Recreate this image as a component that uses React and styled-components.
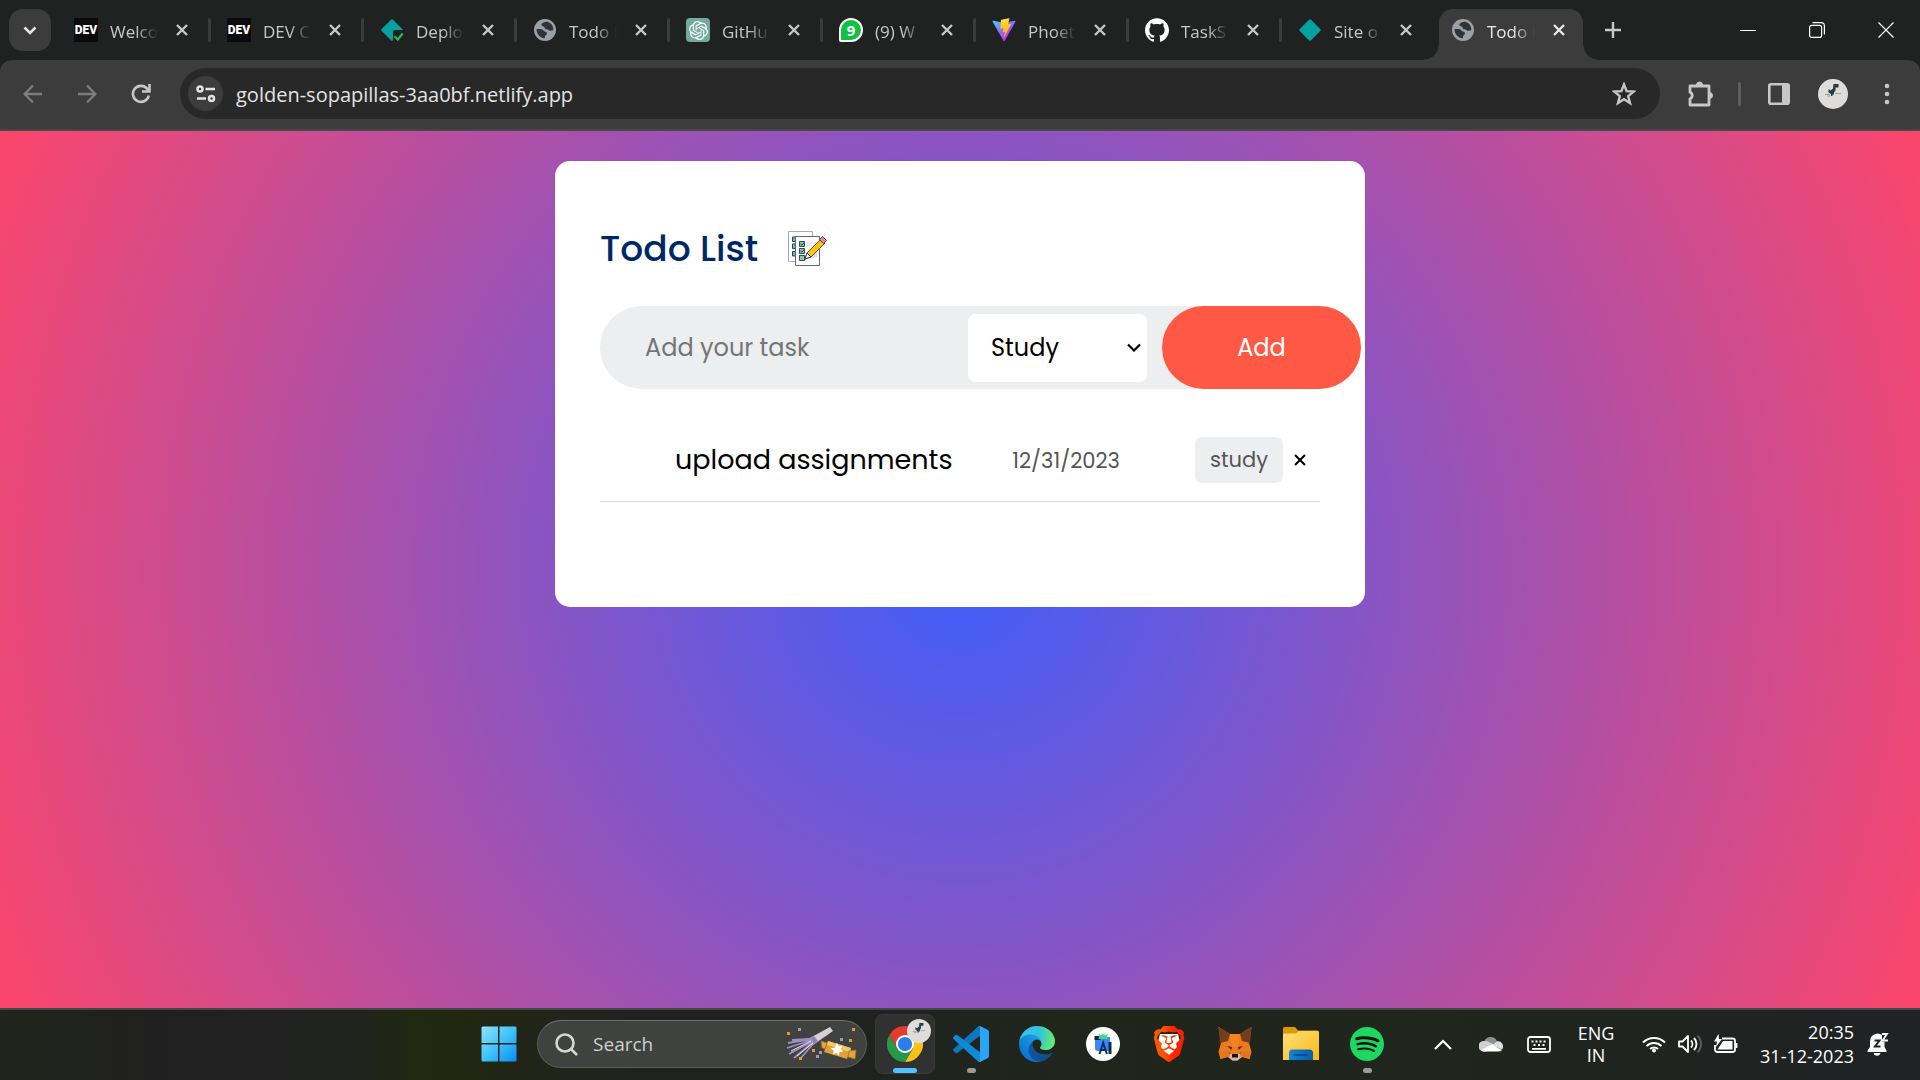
import React from "react";
import styled, { createGlobalStyle, css } from "styled-components";
import { SiBrave, SiSpotify, SiOpenai, SiGithub } from "react-icons/si";

const GlobalStyle = createGlobalStyle`
  *, *::before, *::after { box-sizing: border-box; }
  body { margin: 0; font-family: "Open Sans", "Noto Sans", sans-serif; }
  button, input, select { font: inherit; color: inherit; border: 0; margin: 0; padding: 0; background: none; outline: 0; }
  svg { display: block; flex: none; }
`;

const Desktop = styled.div`
  min-height: 100vh;
  display: flex;
  flex-direction: column;
  background: #202221;
`;

/* ---------- Browser chrome ---------- */

const TabStrip = styled.header`
  display: flex;
  height: 60px;
  padding: 9px 0 0 9px;
  color: #c7c7c7;
`;

const TabSearch = styled.button`
  width: 42px;
  height: 42px;
  margin-right: 7px;
  display: grid;
  place-items: center;
  border-radius: 14px;
  background: #3c3c3c;
  color: #e3e3e3;
`;

const Tab = styled.div`
  position: relative;
  display: flex;
  align-items: center;
  gap: 12px;
  width: 153px;
  height: 42px;
  padding-left: 16px;
  ${(p) =>
    p.$divided &&
    css`
      &::after {
        content: "";
        width: 3px;
        height: 24px;
        margin-left: 2px;
        border-radius: 2px;
        background: #3c3c3c;
      }
    `}
  ${(p) =>
    p.$active &&
    css`
      width: 144px;
      height: 51px;
      margin-left: 4px;
      padding: 0 0 9px 12px;
      border-radius: 14px 14px 0 0;
      background: #3c3c3c;
      color: #e8e8e8;
      &::before,
      &::after {
        content: "";
        position: absolute;
        bottom: 0;
        width: 15px;
        height: 15px;
      }
      &::before {
        right: 100%;
        background: radial-gradient(circle at 0 0, transparent 14px, #3c3c3c 15px);
      }
      &::after {
        left: 100%;
        background: radial-gradient(circle at 100% 0, transparent 14px, #3c3c3c 15px);
      }
    `}
`;

const Favicon = styled.span`
  flex: none;
  display: grid;
  place-items: center;
  width: 24px;
  height: 24px;
`;

const DevBadge = styled(Favicon)`
  background: #0b0b0d;
  color: #fff;
  font: 900 12px/24px Roboto, sans-serif;
`;

const ChatBadge = styled(Favicon)`
  border-radius: 4px;
  background: #74aa9c;
  color: #fff;
`;

const CountBadge = styled(Favicon)`
  border: 2px solid #fff;
  border-radius: 12px 12px 12px 2px;
  background: #12c143;
  color: #fff;
  font: 700 15px/20px "Open Sans", sans-serif;
`;

const TabTitle = styled.button`
  width: 48px;
  flex: none;
  padding-top: 3px;
  text-align: left;
  white-space: nowrap;
  font-size: 17px;
  line-height: 24px;
  mask-image: linear-gradient(to right, #000 55%, transparent);
`;

const IconButton = styled.button`
  flex: none;
  display: grid;
  place-items: center;
  width: ${(p) => p.$size || 24}px;
  height: ${(p) => p.$size || 24}px;
  color: ${(p) => p.$color || "inherit"};
`;

const NewTab = styled(IconButton)`
  margin: 9px 0 0 18px;
  height: 24px;
`;

const WindowControls = styled.div`
  display: flex;
  align-items: center;
  height: 42px;
  margin-left: auto;
  color: #fff;
`;

const WindowButton = styled.button`
  display: grid;
  place-items: center;
  width: 69px;
  height: 42px;
`;

const Toolbar = styled.nav`
  display: flex;
  align-items: center;
  height: 71px;
  padding: 0 15px 2px 15px;
  border-bottom: 2px solid #484848;
  border-radius: 12px 12px 0 0;
  background: #3c3c3c;
  color: #c7c7c7;
`;

const NavButtons = styled.div`
  display: flex;
  gap: 18px;
  margin-right: 21px;
`;

const AddressBar = styled.div`
  flex: 1;
  display: flex;
  align-items: center;
  gap: 13px;
  height: 51px;
  padding: 0 18px 0 8px;
  border-radius: 26px;
  background: #282828;
`;

const SiteInfo = styled(IconButton)`
  border-radius: 50%;
  background: #3c3c3c;
`;

const Url = styled.input`
  flex: 1;
  min-width: 0;
  padding-top: 2px;
  color: #e3e3e3;
  font-size: 20px;
  line-height: 28px;
`;

const ToolbarActions = styled.div`
  display: flex;
  align-items: center;
  gap: 18px;
  margin-left: 22px;
`;

const ToolbarDivider = styled.span`
  width: 3px;
  height: 24px;
  margin: 0 2px;
  border-radius: 2px;
  background: #5e5e5e;
`;

/* ---------- Todo app ---------- */

const Page = styled.main`
  flex: 1;
  padding: 30px;
  background: radial-gradient(circle, #3f5efb 0%, #fc466b 100%);
  font-family: Poppins, Inter, "Open Sans", sans-serif;
`;

const Card = styled.section`
  max-width: 810px;
  margin: 0 auto;
  padding: 60px 45px 105px;
  border-radius: 15px;
  background: #fff;
`;

const Heading = styled.h1`
  display: flex;
  align-items: center;
  gap: 30px;
  margin: 0 0 30px;
  color: #002765;
  font-size: 36px;
  font-weight: 500;
  line-height: 55px;
`;

const TaskForm = styled.form`
  display: flex;
  align-items: center;
  height: 83px;
  border-radius: 42px;
  background: #edeef0;
  font-size: 24px;
`;

const TaskInput = styled.input`
  flex: 0 0 368px;
  width: 368px;
  min-width: 0;
  height: 100%;
  padding-left: 45px;
  &::placeholder { color: #757575; opacity: 1; }
`;

const SelectBox = styled.div`
  flex: 0 0 179px;
  display: grid;
  align-items: center;
  height: 68px;
  margin-right: 15px;
  border-radius: 7px;
  background: #fff;
  color: #000;
  & > * { grid-area: 1 / 1; }
  & > svg { justify-self: end; margin-right: 6px; pointer-events: none; }
`;

const Category = styled.select`
  appearance: none;
  width: 100%;
  height: 100%;
  padding-left: 23px;
`;

const AddButton = styled.button`
  flex: 0 0 199px;
  height: 100%;
  border-radius: 42px;
  background: #ff5945;
  color: #fff;
`;

const TaskList = styled.ul`
  margin: 30px 0 0;
  padding: 0;
  list-style: none;
`;

const TaskItem = styled.li`
  display: flex;
  align-items: center;
  height: 83px;
  padding: 0 12px 0 75px;
  border-bottom: 1px solid #d9dadb;
`;

const TaskName = styled.span`
  color: #000;
  font-size: 27px;
  font-weight: 400;
`;

const TaskDate = styled.time`
  margin: 0 75px 0 auto;
  color: #555;
  font-size: 21px;
`;

const TaskTag = styled.span`
  padding: 9px 15px;
  margin-right: 8px;
  border-radius: 7px;
  background: #edeef0;
  color: #555;
  font-size: 21px;
  line-height: 28px;
`;

/* ---------- Taskbar ---------- */

const Taskbar = styled.footer`
  display: flex;
  align-items: center;
  justify-content: flex-end;
  height: 72px;
  padding: 0 30px 2px 0;
  border-top: 2px solid #444645;
  background: linear-gradient(90deg, #20241b 0%, #202020 8%, #202220 18%, #212911 22%, #222613 25%, #202220 33%, #20221f 45%, #20261c 55%, #20251d 75%, #202322 92%, #202224 100%);
  color: #fff;
`;

const AppIcons = styled.div`
  display: flex;
  align-items: center;
  gap: 6px;
  margin-right: 34px;
`;

const AppButton = styled.button`
  position: relative;
  display: grid;
  place-items: center;
  width: 60px;
  height: 60px;
  border: 1px solid ${(p) => (p.$open ? "#393a39" : "transparent")};
  border-radius: 8px;
  background: ${(p) => (p.$open ? "#303130" : "transparent")};
  ${(p) =>
    p.$running &&
    css`
      &::after {
        content: "";
        position: absolute;
        bottom: 0;
        width: ${p.$open ? 24 : 9}px;
        height: 5px;
        border-radius: 3px;
        background: ${p.$open ? "#4cc2ff" : "#9a9a9a"};
      }
    `}
`;

const ProfileBadge = styled.span`
  position: absolute;
  top: 4px;
  right: 3px;
`;

const SearchBox = styled.label`
  display: flex;
  align-items: center;
  gap: 15px;
  width: 330px;
  height: 48px;
  margin: 0 2px;
  padding: 0 8px 0 16px;
  border: 1px solid #5a5b5a;
  border-top-color: #6d6e6d;
  border-radius: 24px;
  background: #40423f;
  color: #d6d6d6;
`;

const SearchInput = styled.input`
  flex: 1;
  min-width: 0;
  font-size: 19px;
  line-height: 28px;
  &::placeholder { color: #d0d0d0; opacity: 1; }
`;

const Tray = styled.div`
  display: flex;
  align-items: center;
  font-size: 18px;
  line-height: 24px;
`;

const TrayGroup = styled.div`
  display: flex;
  align-items: center;
  gap: ${(p) => p.$gap}px;
`;

const Language = styled.button`
  width: 48px;
  margin: 0 22px 0 21px;
  text-align: center;
  line-height: 22px;
`;

const Clock = styled.button`
  margin: 0 12px 0 22px;
  text-align: right;
`;

/* ---------- Icons ---------- */

const Stroke = ({ w = 24, h = w, box = `0 0 ${w} ${h}`, sw = 2, children, ...rest }) => (
  <svg width={w} height={h} viewBox={box} fill="none" stroke="currentColor" strokeWidth={sw} aria-hidden="true" {...rest}>
    {children}
  </svg>
);

const CloseIcon = ({ sw = 2.4 }) => (
  <Stroke w={12} sw={sw}><path d="M1 1l10 10M11 1L1 11" /></Stroke>
);

const Globe = () => (
  <svg width="24" height="24" viewBox="0 0 24 24" aria-hidden="true">
    <circle cx="12" cy="12" r="11" fill="#9aa0a6" />
    <path d="M13.500 3.500c-1.400.5-3.600 1-4.800 2.300-1 1.200.3 2.500 1.600 2.600 1.500.2 1 1.600 2 2.600.9.9 2.400.3 3.400 1.200 1 .9 2.600.6 4.600.1.4-4.300-2.400-7.900-6.800-8.800z" fill="#303434" />
    <path d="M3.500 11.200c0 4.800 3.600 8.600 8.100 9.100.8-.9-.2-2 .9-2.900 1.100-.8 2-1.500 1.300-2.800-.8-1.300-2.400-.8-3.200-1.900-1.200-1.500-4.200-1.800-7.100-1.500z" fill="#303434" />
  </svg>
);

const Diamond = ({ check }) => (
  <svg width="24" height="24" viewBox="0 0 24 24" aria-hidden="true">
    <rect x="4" y="4" width="16" height="16" rx="1.5" fill="#05a19c" transform="rotate(45 12 12)" />
    {check && <path d="M13 24V14q0-2 2-2h9v12z" fill="#202221" />}
    {check && <path d="M14.500 18.300l3.200 3.200 5-6" fill="none" stroke="#2fb554" strokeWidth="2.2" />}
  </svg>
);

const ViteIcon = () => (
  <svg width="24" height="24" viewBox="0 0 410 404" aria-hidden="true">
    <defs>
      <linearGradient id="viteA" x1="6" y1="33" x2="235" y2="344" gradientUnits="userSpaceOnUse"><stop stopColor="#41d1ff" /><stop offset="1" stopColor="#bd34fe" /></linearGradient>
      <linearGradient id="viteB" x1="194" y1="9" x2="236" y2="293" gradientUnits="userSpaceOnUse"><stop stopColor="#ffea83" /><stop offset=".08" stopColor="#ffdd35" /><stop offset="1" stopColor="#ffa800" /></linearGradient>
    </defs>
    <path fill="url(#viteA)" d="M399.641 59.525L215.643 388.545c-3.800 6.793-13.560 6.833-17.415.073L10.582 59.556c-4.200-7.366 2.100-16.290 10.446-14.797l184.195 32.923c1.175.21 2.378.208 3.553-.006l180.343-32.870c8.320-1.517 14.649 7.337 10.522 14.719z" />
    <path fill="url(#viteB)" d="M292.965 1.574L156.801 28.255a5 5 0 0 0-4.030 4.611l-8.376 141.464a5 5 0 0 0 6.115 5.168l37.910-8.749a5 5 0 0 1 6.023 5.873l-11.263 55.153a5 5 0 0 0 6.352 5.785l23.415-7.114a5 5 0 0 1 6.350 5.796l-17.899 86.633c-1.120 5.419 6.088 8.374 9.094 3.728l2.008-3.103 110.954-221.428a5 5 0 0 0-5.418-7.149l-39.022 7.531a5 5 0 0 1-5.752-6.296l25.469-88.291a5 5 0 0 0-5.766-6.293z" />
  </svg>
);

const Dino = ({ size }) => (
  <svg width={size} height={size} viewBox="0 0 30 30" aria-hidden="true">
    <circle cx="15" cy="15" r="15" fill="#dedddb" />
    <path d="M15.500 5h5v3.500h-3v3l-1.500 2v2h-1.500v1.500H13V15l-2.500-1.500V10l2 1.500 2.500-2z" fill="#2f3a40" />
    <path d="M7 15.500h5M17 14.500h6M9 17h3" stroke="#8f9090" strokeWidth=".8" />
  </svg>
);

const TodoIcon = () => (
  <svg width="39" height="36" viewBox="0 0 39 36" aria-hidden="true">
    <path d="M.5.500h24v30H.500z" fill="#fff" stroke="#a3a7cf" />
    <path d="M4.500 6h3v4.500h-3zM4.500 13h3v4.500h-3zM4.500 20.500h3V25h-3z" fill="#6fc07a" stroke="#2c3f72" />
    <path d="M7.500 5.500h24v29h-24z" fill="#fff" stroke="#5a62a8" />
    <path d="M19 12h9M19 15h7" stroke="#d9dcef" />
    <path d="M24 23l5-5v8l-7 1z" fill="#d9dcef" />
    <path d="M11.500 10.500h5v5h-5zM11.500 17.500h5v5h-5zM11.500 24.500h5v5h-5z" fill="#84cf8c" stroke="#2c4a62" />
    <path d="M12.500 13l1.500 1.200 2-2.700M12.500 20l1.500 1.200 2-2.700" fill="none" stroke="#2c3f72" />
    <path d="M17 28l2-6L33 8l4 4-14 14z" fill="#fbc412" stroke="#6b5226" />
    <path d="M17 28l2-6 4 4z" fill="#fff" stroke="#34407a" />
    <path d="M31.500 8.500l3-3 4 4-3 3z" fill="#f2818b" stroke="#4b4b86" />
  </svg>
);

const WindowsIcon = () => (
  <svg width="36" height="36" viewBox="0 0 36 36" aria-hidden="true">
    <defs><linearGradient id="win" x2="1" y2="1"><stop stopColor="#8fe3ff" /><stop offset=".5" stopColor="#3fc3fb" /><stop offset="1" stopColor="#0a8cf5" /></linearGradient></defs>
    <path fill="url(#win)" d="M1.500.500H17V17H.500V1.500zM18.500.500h16l1 1V17h-17zM.500 18.500H17v17H1.500l-1-1zM18.500 18.500h17v16l-1 1h-16z" />
  </svg>
);

const PartyArt = () => (
  <svg width="72" height="36" viewBox="0 0 72 36" aria-hidden="true">
    <path d="M22 13L44 1l3 4-20 14z" fill="#d9cdd6" />
    <path d="M22 13l6-3 4 5-5 4z" fill="#8e82b5" />
    <path d="M26 13L2 17M26 14L1 22M27 15L3 28M27 16L8 32M28 17L14 33M24 13L6 14" stroke="#9d8fc4" strokeWidth="1.8" />
    <path d="M25 15L5 25M27 17L11 30" stroke="#ece6f5" strokeWidth="1" />
    <path d="M42 15l23 7-4 11-23-7z" fill="#dda137" />
    <path d="M42 15l23 7-1 4-23-7z" fill="#f1c76b" />
    <path d="M41 17l-6-2 1 7 3 1zM63 25l7-1-1 9-7-2z" fill="#e0a63f" stroke="#a8711c" strokeWidth=".8" />
    <path d="M51 16.500l1.500 4 4-1-2 3.500 3 2.500-4 .5-.5 4-2.500-3-4 1.500 1.500-3.500-3.500-2.500 4.500-1z" fill="#fff" />
    <path d="M1 6h3v3H1zM66 2h3v3h-3zM63 13h3v3h-3zM26 23h3v3h-3zM13 31h3v3h-3z" fill="#d99f33" />
    <path d="M12 2h3v3h-3zM54 12h3v3h-3zM33 25h3v3h-3zM30 29h3v3h-3z" fill="#a493bd" />
  </svg>
);

const ChromeIcon = () => (
  <svg width="36" height="36" viewBox="0 0 48 48" aria-hidden="true">
    <path d="M3.215 12a24 24 0 0 1 41.570 0H24L13.608 30z" fill="#e33b2e" />
    <path d="M44.785 12A24 24 0 0 1 24 48l10.392-18L24 12z" fill="#fbc116" />
    <path d="M24 48A24 24 0 0 1 3.215 12l10.393 18h20.784z" fill="#279847" />
    <circle cx="24" cy="24" r="12" fill="#fff" />
    <circle cx="24" cy="24" r="9.5" fill="#2f7bea" />
  </svg>
);

const CodeIcon = () => (
  <svg width="36" height="36" viewBox="0 0 100 100" aria-hidden="true">
    <path fill="#0f76bd" d="M96.460 10.800L75.860.880a6.230 6.230 0 0 0-7.100 1.200L1.300 63.580a4.170 4.170 0 0 0 .010 6.160l5.500 5a4.170 4.170 0 0 0 5.330.24l81.230-61.620c2.730-2.070 6.640-.13 6.640 3.290v-.24a6.250 6.250 0 0 0-3.550-5.610z" />
    <path fill="#0d8ad8" d="M96.460 89.200l-20.600 9.920a6.230 6.230 0 0 1-7.100-1.200L1.300 36.420a4.170 4.170 0 0 1 .010-6.160l5.500-5a4.170 4.170 0 0 1 5.330-.24l81.230 61.620c2.730 2.070 6.640.13 6.640-3.290v.24a6.250 6.250 0 0 1-3.550 5.610z" />
    <path fill="#2aa5f5" d="M75.860 99.130a6.230 6.230 0 0 1-7.100-1.200c2.300 2.300 6.240.67 6.240-2.590V4.660c0-3.260-3.940-4.900-6.240-2.590a6.230 6.230 0 0 1 7.100-1.200l20.600 9.900A6.250 6.250 0 0 1 100 16.400v67.200a6.250 6.250 0 0 1-3.540 5.630z" />
  </svg>
);

const EdgeIcon = () => (
  <svg width="36" height="36" viewBox="0 0 256 256" aria-hidden="true">
    <defs>
      <linearGradient id="edA" x1="60" y1="177" x2="240" y2="177" gradientUnits="userSpaceOnUse"><stop stopColor="#0c59a4" /><stop offset="1" stopColor="#114a8b" /></linearGradient>
      <linearGradient id="edB" x1="157" y1="100" x2="46" y2="221" gradientUnits="userSpaceOnUse"><stop stopColor="#1b9de2" /><stop offset="1" stopColor="#0d74cf" /></linearGradient>
      <radialGradient id="edC" cx="26" cy="60" r="230" gradientUnits="userSpaceOnUse"><stop stopColor="#35c1f1" /><stop offset=".5" stopColor="#2fc2df" /><stop offset="1" stopColor="#66eb6e" /></radialGradient>
    </defs>
    <path fill="url(#edA)" d="M231.070 190.540c-3.380 1.760-6.900 3.300-10.500 4.600a101.900 101.900 0 0 1-35.900 6.460c-47.320 0-88.540-32.550-88.540-74.320A31.480 31.480 0 0 1 112.600 100c-42.800 1.800-53.800 46.400-53.800 72.530 0 73.880 68.090 81.370 82.760 81.370 7.910 0 19.840-2.300 27-4.560l1.310-.44a128.340 128.340 0 0 0 66.600-52.800 4 4 0 0 0-5.400-5.560z" />
    <path fill="url(#edB)" d="M105.730 241.420A79.200 79.200 0 0 1 83 220.100a80.720 80.720 0 0 1 29.500-120.100c3.120-1.470 8.450-4.130 15.540-4a32.350 32.350 0 0 1 25.690 13 31.880 31.880 0 0 1 6.360 18.660c0-.21 24.460-79.600-80-79.600-43.900 0-80 41.660-80 78.210a130.150 130.150 0 0 0 12.110 56 128 128 0 0 0 156.380 67.110 75.550 75.550 0 0 1-62.780-8z" />
    <path fill="url(#edC)" d="M152.330 148.860c-.81 1.050-3.300 2.500-3.300 5.660 0 2.610 1.700 5.120 4.720 7.230 14.380 10 41.490 8.680 41.560 8.680a59.560 59.560 0 0 0 30.270-8.350A61.380 61.380 0 0 0 256 109.200c.26-22.410-8-37.310-11.340-43.910C223.460 23.840 177.720 0 128 0A128 128 0 0 0 0 126.200c.48-36.540 36.800-66.050 80-66.050 3.500 0 23.460.34 42 10.070 16.340 8.580 24.900 18.940 30.850 29.210 6.180 10.670 7.280 24.150 7.280 29.520s-2.740 13.330-7.800 19.910z" />
  </svg>
);

const StudioIcon = () => (
  <svg width="34" height="34" viewBox="0 0 34 34" aria-hidden="true">
    <circle cx="17" cy="17" r="17" fill="#fff" />
    <path d="M9 10h15v14H12q-3 0-3-3z" fill="#4285f4" />
    <path d="M8.500 9h6v4h-6z" fill="#12233b" />
    <path d="M12.500 12a4.700 4.700 0 0 1 9.400 0z" fill="#3ddc84" />
    <path d="M13 7l2 3M21.500 7l-2 3" stroke="#3ddc84" strokeWidth="1.2" />
    <path d="M13.500 27l3.700-11 3.700 11M14.500 23h5.500" fill="none" stroke="#0b3264" strokeWidth="2" />
    <path d="M22.500 15h3v12h-3z" fill="#073042" />
  </svg>
);

const BraveIcon = () => (
  <svg width="36" height="36" viewBox="0 0 36 36" aria-hidden="true">
    <defs><linearGradient id="brv"><stop offset=".3" stopColor="#ff5500" /><stop offset=".7" stopColor="#ff2000" /></linearGradient></defs>
    <path d="M9 8h18l2 8-4 12-7 4-7-4-4-12z" fill="#fff" />
    <SiBrave size={36} style={{ fill: "url(#brv)" }} />
  </svg>
);

const FoxIcon = () => (
  <svg width="34" height="34" viewBox="0 0 34 34" aria-hidden="true">
    <path d="M3 16L1 4 .500 0 12 7h10L33.500 0 33 4l-2 12 2.500 9-2 7-7-2-5 3.500h-5L9.500 30l-7 2-2-7z" fill="#ee7a1f" />
    <path d="M.500 0L12 7l-2 7-8 2zM33.500 0L22 7l2 7 8 2z" fill="#743d1b" />
    <path d="M12 7h10l-2 13h-6z" fill="#f5841f" />
    <path d="M1 24h9l-.500 6-7 2zM33 24h-9l.500 6 7 2z" fill="#e4761b" />
    <path d="M9 19l5 1-.500 3zM25 19l-5 1 .500 3z" fill="#463128" />
    <path d="M10 24l3 2-1 5zM24 24l-3 2 1 5z" fill="#c9601a" />
    <path d="M12 27h10l1 3-3.500 3.500h-5L11 30z" fill="#c8bcb3" />
    <path d="M14 27h6v3.500h-6z" fill="#161616" />
  </svg>
);

const FolderIcon = () => (
  <svg width="36" height="34" viewBox="0 0 36 34" aria-hidden="true">
    <defs>
      <linearGradient id="fld" x2="1" y2="1"><stop stopColor="#ffe07a" /><stop offset="1" stopColor="#f9b916" /></linearGradient>
      <linearGradient id="fldB" x2="1"><stop stopColor="#1583d8" /><stop offset="1" stopColor="#0b5cab" /></linearGradient>
    </defs>
    <path d="M0 1.500Q0 0 1.500 0H12l3 3.500h19q2 0 2 2V10H0z" fill="#dc9a05" />
    <path d="M0 8q0-1.500 1.500-1.500h11L16 4h18.500Q36 4 36 5.500V33H0z" fill="url(#fld)" />
    <path d="M6 33v-7q0-3.500 3.500-3.500h17Q30 22.500 30 26v7z" fill="url(#fldB)" />
    <path d="M10.500 28h14.500" stroke="#0a4685" strokeWidth="1.5" />
  </svg>
);

const SpotifyIcon = () => (
  <svg width="34" height="34" viewBox="0 0 34 34" aria-hidden="true">
    <circle cx="17" cy="17" r="15" fill="#111" />
    <SiSpotify size={34} style={{ fill: "#1ed760" }} />
  </svg>
);

const CloudIcon = () => (
  <svg width="24" height="16" viewBox="0 0 24 16" aria-hidden="true">
    <path d="M5 6a7 7 0 0 1 13-1l1 1-9 4z" fill="#8f918f" />
    <path d="M4.500 15.500A5 5 0 0 1 5 5q3-.5 5 1l8 4-11 5.500z" fill="#cfd0cf" />
    <path d="M13 9l5-3.500a5 5 0 0 1 5 8z" fill="#dcdddc" />
    <path d="M2 14L13 8.500l10 5.500q-1.500 1.500-4 1.500H5q-2 0-3-1.500z" fill="#fff" />
  </svg>
);

const KeyboardIcon = () => (
  <Stroke w={24} h={17} sw={1.8}>
    <rect x="1" y="1" width="22" height="15" rx="2.5" />
    <path d="M4.500 5.500h2M8.500 5.500h2M12.500 5.500h2M16.500 5.500h2M6.500 9h2M11 9h2M15.500 9h2M5 12.800h14" />
  </Stroke>
);

const WifiIcon = () => (
  <Stroke w={24} h={18} sw={2}>
    <path d="M1 7.500a15.500 15.500 0 0 1 22 0M4.500 11a10.600 10.600 0 0 1 15 0M8 14a5.800 5.800 0 0 1 8 0" />
    <circle cx="12" cy="15.5" r="1" />
  </Stroke>
);

const SpeakerIcon = () => (
  <Stroke w={24} h={20} sw={1.8}>
    <path d="M1 7.500h3.500L10 2v16l-5.500-5.500H1z" strokeLinejoin="round" />
    <path d="M13 6.500a5 5 0 0 1 0 7M16 4a8.500 8.500 0 0 1 0 12" />
    <path d="M19.500 1.500a12 12 0 0 1 0 17" stroke="#5d605d" />
  </Stroke>
);

const BatteryIcon = () => (
  <Stroke w={24} h={20} sw={1.8}>
    <path d="M8 4.500h10.500q2.500 0 2.500 2.500v8.500q0 2.500-2.500 2.500H3.500Q1 18 1 15.500V11" />
    <path d="M9 7h9.500v8.500H3.500z" fill="currentColor" stroke="none" />
    <path d="M22.500 9v5" />
    <path d="M4.500 0L0 7.500h3L2 13l6-8H5z" fill="currentColor" stroke="none" />
  </Stroke>
);

const BellIcon = () => (
  <svg width="22" height="24" viewBox="0 0 22 24" fill="#fff" aria-hidden="true">
    <path d="M10.500 1.500Q3 2.500 3 9.500V15l-2.500 3.500V20h19v-1.500L17.500 15V9.500H15V3q-2-1.500-4.500-1.500zM6.500 21h7a3.600 3.600 0 0 1-7 0z" />
    <path d="M7.500 8.500h5L8 14.500h5.500" fill="none" stroke="#202322" strokeWidth="2" />
    <path d="M15 2h5l-4.500 6.500H21" fill="none" stroke="#fff" strokeWidth="1.8" />
  </svg>
);

/* ---------- Data ---------- */

const tabs = [
  { title: "Welco", icon: <DevBadge>DEV</DevBadge> },
  { title: "DEV C", icon: <DevBadge>DEV</DevBadge> },
  { title: "Deplo", icon: <Favicon><Diamond check /></Favicon> },
  { title: "Todo L", icon: <Favicon><Globe /></Favicon> },
  { title: "GitHu", icon: <ChatBadge><SiOpenai size={19} /></ChatBadge> },
  { title: "(9) W", icon: <CountBadge>9</CountBadge> },
  { title: "Phoet", icon: <Favicon><ViteIcon /></Favicon> },
  { title: "TaskS", icon: <Favicon><SiGithub size={24} color="#fff" /></Favicon> },
  { title: "Site o", icon: <Favicon><Diamond /></Favicon> },
  { title: "Todo L", icon: <Favicon><Globe /></Favicon>, active: true },
];

const tasks = [{ name: "upload assignments", date: "12/31/2023", tag: "study" }];

const apps = [
  { name: "Visual Studio Code", icon: <CodeIcon />, running: true },
  { name: "Edge", icon: <EdgeIcon /> },
  { name: "Android Studio", icon: <StudioIcon /> },
  { name: "Brave", icon: <BraveIcon /> },
  { name: "MetaMask", icon: <FoxIcon /> },
  { name: "File Explorer", icon: <FolderIcon /> },
  { name: "Spotify", icon: <SpotifyIcon />, running: true },
];

/* ---------- Sections ---------- */

const BrowserTabs = () => (
  <TabStrip>
    <TabSearch aria-label="Search tabs">
      <Stroke w={14} h={9} sw={2.6}><path d="M1.500 1.500L7 7l5.500-5.500" /></Stroke>
    </TabSearch>
    {tabs.map((tab, i) => (
      <Tab key={i} $active={tab.active} $divided={i < tabs.length - 2}>
        {tab.icon}
        <TabTitle>{tab.title}</TabTitle>
        <IconButton aria-label="Close tab"><CloseIcon /></IconButton>
      </Tab>
    ))}
    <NewTab aria-label="New tab"><Stroke w={16} sw={2.4}><path d="M8 0v16M0 8h16" /></Stroke></NewTab>
    <WindowControls>
      <WindowButton aria-label="Minimize"><Stroke w={16} sw={1}><path d="M0 8.500h16" /></Stroke></WindowButton>
      <WindowButton aria-label="Restore">
        <Stroke w={16} sw={1.2}>
          <rect x=".6" y="3.4" width="12" height="12" rx="2" />
          <path d="M3.500.600H12q3.400 0 3.400 3.400v8.500" />
        </Stroke>
      </WindowButton>
      <WindowButton aria-label="Close"><Stroke w={16} sw={1.2}><path d="M.500.500l15 15M15.500.500l-15 15" /></Stroke></WindowButton>
    </WindowControls>
  </TabStrip>
);

const BrowserToolbar = () => (
  <Toolbar>
    <NavButtons>
      <IconButton $size={36} $color="#7d7d7d" aria-label="Back"><Stroke w={20} sw={2.3}><path d="M19 10H2M10 1.500L1.700 10l8.300 8.500" /></Stroke></IconButton>
      <IconButton $size={36} $color="#7d7d7d" aria-label="Forward"><Stroke w={20} sw={2.3}><path d="M1 10h17M10 1.500l8.300 8.500-8.300 8.500" /></Stroke></IconButton>
      <IconButton $size={36} aria-label="Reload">
        <Stroke w={20} sw={2.6}><path d="M17.800 11.500A8 8 0 1 1 16 4.600l1.500 1.900" /><path d="M18.500 0v7.500H11" /></Stroke>
      </IconButton>
    </NavButtons>
    <AddressBar>
      <SiteInfo $size={35} $color="#e3e3e3" aria-label="Site information">
        <Stroke w={20} h={18} sw={2.5}>
          <circle cx="4" cy="4" r="2.5" /><path d="M9.500 4H19M1 13.500h9" /><circle cx="15.5" cy="13.5" r="2.5" />
        </Stroke>
      </SiteInfo>
      <Url aria-label="Address" defaultValue="golden-sopapillas-3aa0bf.netlify.app" />
      <IconButton $size={36} aria-label="Bookmark">
        <Stroke w={24} sw={2.4}><path d="M12 2.500l2.600 6.600 7 .500-5.400 4.500 1.800 6.900-6-3.800-6 3.800 1.800-6.900-5.400-4.500 7-.500z" /></Stroke>
      </IconButton>
    </AddressBar>
    <ToolbarActions>
      <IconButton $size={36} aria-label="Extensions">
        <Stroke w={26} sw={2.8} strokeLinejoin="round">
          <path d="M3 5h19v19H3v-6.300a3.500 3.500 0 0 0 0-6.500z" />
          <path d="M9.500 4a3 3 0 0 1 6 0zM22.500 11.500a3 3 0 0 1 0 6z" fill="currentColor" strokeWidth="1" />
        </Stroke>
      </IconButton>
      <ToolbarDivider />
      <IconButton $size={36} aria-label="Side panel">
        <Stroke w={22} sw={2.6}><rect x="1.3" y="1.3" width="19.4" height="19.4" rx="1.5" /><path d="M14 2h6.500v18H14z" fill="currentColor" stroke="none" /></Stroke>
      </IconButton>
      <IconButton $size={36} aria-label="Profile"><Dino size={30} /></IconButton>
      <IconButton $size={36} aria-label="Menu">
        <svg width="6" height="22" viewBox="0 0 6 22" fill="currentColor" aria-hidden="true"><circle cx="3" cy="3" r="2.3" /><circle cx="3" cy="11" r="2.3" /><circle cx="3" cy="19" r="2.3" /></svg>
      </IconButton>
    </ToolbarActions>
  </Toolbar>
);

const TodoApp = () => (
  <Page>
    <Card>
      <Heading>Todo List <TodoIcon /></Heading>
      <TaskForm onSubmit={(e) => e.preventDefault()}>
        <TaskInput aria-label="Task" placeholder="Add your task" />
        <SelectBox>
          <Category aria-label="Category" defaultValue="study">
            <option value="study">Study</option>
            <option value="work">Work</option>
          </Category>
          <Stroke w={14} h={9} sw={2.2}><path d="M1 1.500l6 6 6-6" /></Stroke>
        </SelectBox>
        <AddButton>Add</AddButton>
      </TaskForm>
      <TaskList>
        {tasks.map((task) => (
          <TaskItem key={task.name}>
            <TaskName>{task.name}</TaskName>
            <TaskDate>{task.date}</TaskDate>
            <TaskTag>{task.tag}</TaskTag>
            <IconButton aria-label="Delete task" $size={17} $color="#000"><CloseIcon sw={2} /></IconButton>
          </TaskItem>
        ))}
      </TaskList>
    </Card>
  </Page>
);

const SystemTaskbar = () => (
  <Taskbar>
    <AppIcons>
      <AppButton aria-label="Start"><WindowsIcon /></AppButton>
      <SearchBox>
        <Stroke w={24} sw={2.6}><circle cx="11" cy="11" r="8.5" /><path d="M17 17l6 6" /></Stroke>
        <SearchInput aria-label="Search" placeholder="Search" />
        <PartyArt />
      </SearchBox>
      <AppButton aria-label="Chrome" $open $running>
        <ChromeIcon />
        <ProfileBadge><Dino size={24} /></ProfileBadge>
      </AppButton>
      {apps.map((app) => (
        <AppButton key={app.name} aria-label={app.name} $running={app.running}>{app.icon}</AppButton>
      ))}
    </AppIcons>
    <Tray>
      <TrayGroup $gap={24}>
        <IconButton aria-label="Show hidden icons"><Stroke w={18} h={11} sw={2.2}><path d="M1 10l8-8 8 8" /></Stroke></IconButton>
        <IconButton aria-label="OneDrive"><CloudIcon /></IconButton>
        <IconButton aria-label="Touch keyboard"><KeyboardIcon /></IconButton>
      </TrayGroup>
      <Language>ENG<br />IN</Language>
      <TrayGroup $gap={12}>
        <WifiIcon />
        <SpeakerIcon />
        <BatteryIcon />
      </TrayGroup>
      <Clock>20:35<br />31-12-2023</Clock>
      <IconButton aria-label="Notifications"><BellIcon /></IconButton>
    </Tray>
  </Taskbar>
);

export default function App() {
  return (
    <Desktop>
      <GlobalStyle />
      <BrowserTabs />
      <BrowserToolbar />
      <TodoApp />
      <SystemTaskbar />
    </Desktop>
  );
}
